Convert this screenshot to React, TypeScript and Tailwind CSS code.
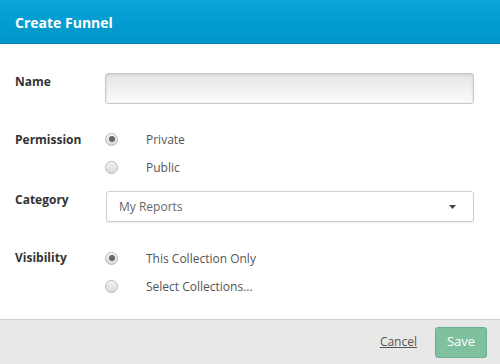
import React from "react";

function Radio({ checked }: { checked?: boolean }) {
  return (
    <span className="flex h-[13px] w-[13px] items-center justify-center rounded-full border border-[#b5b5b5] bg-gradient-to-b from-[#f0f0f0] to-[#dcdcdc] shadow-[inset_0_1px_1px_rgba(255,255,255,0.8)]">
      {checked && <span className="h-[6px] w-[6px] rounded-full bg-[#666]" />}
    </span>
  );
}

function Option({ checked, label }: { checked?: boolean; label: string }) {
  return (
    <div className="flex h-[28px] items-center">
      <span className="ml-[105px]">
        <Radio checked={checked} />
      </span>
      <span className="ml-[28px] pt-[2px] text-[12px] text-[#555]">{label}</span>
    </div>
  );
}

export default function App() {
  return (
    <div
      className="flex h-[364px] w-[500px] flex-col bg-white"
      style={{ fontFamily: '"Open Sans", "Liberation Sans", sans-serif' }}
    >
      <div className="flex h-[44px] items-center border-b border-[#0a84b0] bg-gradient-to-b from-[#0aa5da] to-[#0095c8] pl-[15px] pt-[2px]">
        <span className="text-[14px] font-bold text-white">Create Funnel</span>
      </div>

      <div className="flex-1">
        {/* Name */}
        <div className="mt-[29px] flex">
          <div className="w-[105px] shrink-0 pl-[15px] text-[12px] font-bold leading-[18px] text-[#333]">Name</div>
          <div className="h-[31px] w-[369px] rounded-[3px] border border-[#c8c8c8] bg-gradient-to-b from-[#e6e6e6] to-[#fbfbfb] shadow-[inset_0_1px_3px_rgba(0,0,0,0.12)]" />
        </div>

        {/* Permission */}
        <div className="relative mt-[21px]">
          <div className="absolute left-[15px] top-[6px] text-[12px] font-bold leading-[18px] text-[#333]">Permission</div>
          <Option checked label="Private" />
          <Option label="Public" />
        </div>

        {/* Category */}
        <div className="mt-[10px] flex">
          <div className="w-[106px] shrink-0 pl-[15px] text-[12px] font-bold leading-[18px] text-[#333]">Category</div>
          <div className="flex h-[31px] w-[368px] items-center justify-between rounded-[3px] border border-[#d0d0d0] bg-white pl-[12px] pr-[17px] shadow-[0_1px_1px_rgba(0,0,0,0.08)]">
            <span className="text-[12px] text-[#666]">My Reports</span>
            <svg width="7" height="4" viewBox="0 0 7 4">
              <path d="M0 0 L7 0 L3.5 4 Z" fill="#444" />
            </svg>
          </div>
        </div>

        {/* Visibility */}
        <div className="relative mt-[22px]">
          <div className="absolute left-[15px] top-[5px] text-[12px] font-bold leading-[18px] text-[#333]">Visibility</div>
          <Option checked label="This Collection Only" />
          <Option label="Select Collections..." />
        </div>
      </div>

      <div className="flex h-[45px] items-center justify-end border-t border-[#cfcfcf] bg-[#e8e8e8] pr-[13px]">
        <span className="mr-[18px] text-[12px] text-[#555] underline">Cancel</span>
        <button className="h-[31px] w-[52px] rounded-[3px] border border-[#6eb08e] bg-[#7fc19e] text-[13px] text-white">
          Save
        </button>
      </div>
    </div>
  );
}
